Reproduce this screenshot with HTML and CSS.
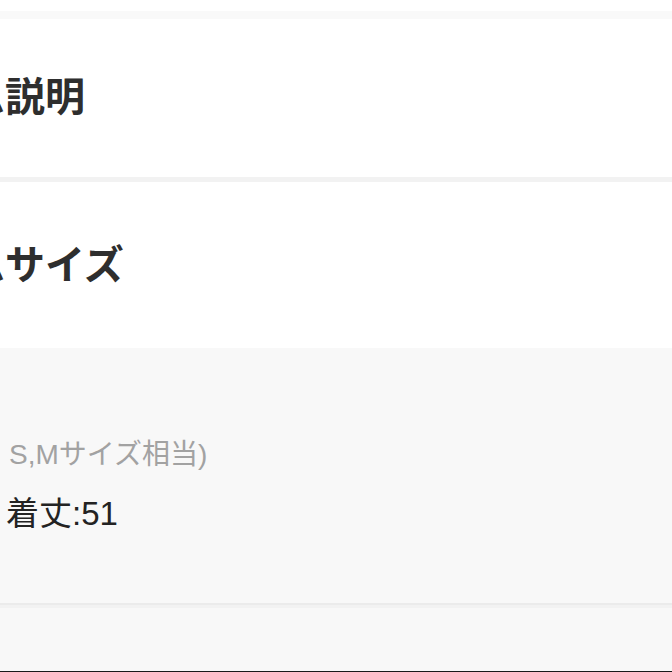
FILE: index.html
```html
<!DOCTYPE html>
<html lang="ja">
<head>
<meta charset="utf-8">
<title>アイテム説明</title>
<link rel="stylesheet" href="styles.css">
</head>
<body>
<div class="page">
  <div class="top-gap"></div>
  <div class="band"></div>
  <section class="block block-desc">
    <h2 class="heading">アイテム説明</h2>
  </section>
  <div class="divider"></div>
  <section class="block block-size">
    <h2 class="heading">アイテムサイズ</h2>
  </section>
  <section class="detail">
    <p class="note note-sub">S,Mサイズ相当)</p>
    <p class="note note-main">着丈:51</p>
  </section>
  <div class="rule"></div>
  <div class="detail-tail"></div>
  <div class="edge"></div>
</div>
</body>
</html>
```

FILE: styles.css
```css
html, body {
  margin: 0;
  padding: 0;
  background: #ffffff;
  overflow: hidden;
}

.page {
  width: 672px;
  height: 672px;
  display: flex;
  flex-direction: column;
  overflow: hidden;
  font-family: "Noto Sans CJK JP", "Noto Sans", sans-serif;
}

.top-gap {
  height: 11px;
  background: #ffffff;
}

.band {
  height: 8px;
  background: #f9f9f9;
}

.block {
  box-sizing: border-box;
  background: #ffffff;
}

.block-desc {
  height: 158px;
  padding-top: 55px;
}

.block-size {
  height: 166px;
  padding-top: 60px;
}

.heading {
  margin: 0 0 0 -151px;
  font-size: 40px;
  line-height: 40px;
  font-weight: 700;
  color: #2e2e2e;
  white-space: nowrap;
}

.divider {
  height: 5px;
  background: #f2f2f2;
}

.detail {
  box-sizing: border-box;
  height: 255px;
  padding-top: 87px;
  background: #f8f8f8;
}

.note {
  margin: 0;
  font-family: "Liberation Sans", "Noto Sans CJK JP", sans-serif;
  white-space: nowrap;
}

.note-sub {
  padding-left: 9px;
  font-size: 28px;
  line-height: 40px;
  color: #a2a2a2;
}

.note-main {
  margin-top: 17px;
  padding-left: 6px;
  font-size: 33px;
  line-height: 44px;
  color: #232323;
}

.rule {
  height: 5px;
  box-sizing: border-box;
  border-top: 2px solid #ebebeb;
  background: #f2f2f2;
}

.detail-tail {
  flex: 1;
  background: #f8f8f8;
}

.edge {
  height: 1px;
  background: #1a1a1a;
}
```
